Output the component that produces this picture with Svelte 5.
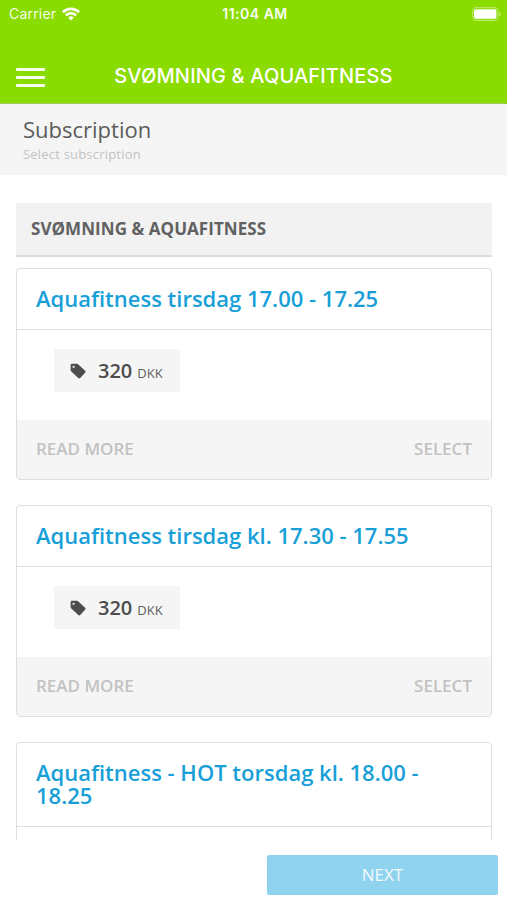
<script lang="ts">
  type Subscription = {
    name: string
    price?: number
    currency?: string
  }

  const category = 'SVØMNING & AQUAFITNESS'

  const subscriptions: Subscription[] = [
    { name: 'Aquafitness tirsdag 17.00 - 17.25', price: 320, currency: 'DKK' },
    { name: 'Aquafitness tirsdag kl. 17.30 - 17.55', price: 320, currency: 'DKK' },
    { name: 'Aquafitness - HOT torsdag kl. 18.00 - 18.25' },
  ]
</script>

<div class="app">
  <header class="top">
    <div class="status">
      <div class="status-left">
        <span class="carrier">Carrier</span>
        <svg class="wifi" width="18" height="14" viewBox="0 0 18 14" fill="none" stroke="#fff" stroke-width="2.6">
          <path d="M0.9 5.2a11.6 11.6 0 0 1 16.2 0" />
          <path d="M3.9 8.4a7.3 7.3 0 0 1 10.2 0" />
          <path d="M9 13.6 6.2 10.7a4 4 0 0 1 5.6 0z" fill="#fff" stroke="none" />
        </svg>
      </div>
      <span class="clock">11:04 AM</span>
      <div class="status-right">
        <svg width="29" height="14" viewBox="0 0 29 14">
          <rect x="0.6" y="0.6" width="25.3" height="12.8" rx="3.6" fill="none" stroke="#fff" stroke-opacity="0.4" stroke-width="1.1" />
          <rect x="2" y="2.2" width="22.4" height="9.6" rx="1.8" fill="#fff" />
          <path d="M27.1 5v4c.9-.4 1.4-1.1 1.4-2s-.5-1.6-1.4-2z" fill="#fff" fill-opacity="0.5" />
        </svg>
      </div>
    </div>
    <div class="navbar">
      <button class="menu" aria-label="Menu">
        <span></span>
        <span></span>
        <span></span>
      </button>
      <h1>{category}</h1>
    </div>
  </header>

  <section class="intro">
    <h2>Subscription</h2>
    <p>Select subscription</p>
  </section>

  <main class="list">
    <h3 class="category">{category}</h3>
    {#each subscriptions as item}
      <article class="card">
        <div class="card-title">{item.name}</div>
        <div class="card-body">
          {#if item.price}
            <div class="price">
              <svg width="16" height="16" viewBox="0 0 16 16">
                <path
                  fill="#4d4d4d"
                  fill-rule="evenodd"
                  d="M.6 2.3C.6 1.4 1.3.8 2.200.8H6.900c.6 0 1.100.2 1.500.6l6.700 6.400c.6.6.6 1.400 0 2l-4.900 5.200c-.6.6-1.400.6-2 0L1.300 8.500C.8 8.100.6 7.600.6 7zM3.600 2.700a1.100 1.100 0 1 0 0 2.200 1.100 1.100 0 0 0 0-2.200z"
                />
              </svg>
              <span class="amount">{item.price}</span>
              <span class="currency">{item.currency}</span>
            </div>
          {/if}
        </div>
        {#if item.price}
          <div class="card-actions">
            <button>READ MORE</button>
            <button>SELECT</button>
          </div>
        {/if}
      </article>
    {/each}
  </main>

  <footer class="bottom">
    <button class="next">NEXT</button>
  </footer>
</div>

<style>
  :global(body) {
    margin: 0;
    background: #fff;
  }

  .app {
    display: flex;
    flex-direction: column;
    width: 507px;
    height: 900px;
    overflow: hidden;
    background: #fff;
    font-family: 'Open Sans', sans-serif;
  }

  h1,
  h2,
  h3,
  p {
    margin: 0;
  }

  button {
    padding: 0;
    border: none;
    background: none;
    font-family: inherit;
    cursor: pointer;
  }

  .top {
    flex: none;
    height: 103px;
    border-bottom: 1px solid #a3c95c;
    background: #8adb00;
    color: #fff;
    font-family: Inter, sans-serif;
  }

  .status {
    display: grid;
    grid-template-columns: 1fr auto 1fr;
    align-items: center;
    height: 27px;
    padding: 0 6px 0 9px;
  }

  .status-left {
    display: flex;
    align-items: center;
    gap: 6px;
  }

  .carrier {
    font-size: 14px;
    letter-spacing: 0.2px;
    opacity: 0.9;
  }

  .clock {
    font-size: 14px;
    font-weight: 600;
    letter-spacing: 0.5px;
    opacity: 0.95;
  }

  .status-right {
    display: flex;
    justify-content: flex-end;
  }

  .navbar {
    display: grid;
    grid-template-columns: 29px 1fr 29px;
    align-items: center;
    height: 50px;
    margin-top: 25px;
    padding: 0 16px;
  }

  .menu {
    display: flex;
    flex-direction: column;
    gap: 5px;
  }

  .menu span {
    width: 29px;
    height: 3px;
    border-radius: 1px;
    background: #fff;
    opacity: 0.92;
  }

  h1 {
    margin-top: -2px;
    font-size: 20px;
    font-weight: 500;
    letter-spacing: 0.15px;
    text-align: center;
    white-space: nowrap;
  }

  .intro {
    flex: none;
    box-sizing: border-box;
    height: 71px;
    padding: 10px 23px 0;
    background: #f5f5f5;
  }

  h2 {
    color: #5c5c5c;
    font-size: 22px;
    font-weight: 400;
    line-height: 30px;
  }

  .intro p {
    color: #c3c3c3;
    font-size: 13px;
    letter-spacing: 0.2px;
    line-height: 20px;
  }

  .list {
    flex: 1;
    min-height: 0;
    padding: 28px 15px 0 16px;
    overflow: hidden;
  }

  .category {
    box-sizing: border-box;
    height: 54px;
    margin-bottom: 11px;
    padding-left: 15px;
    border-bottom: 2px solid #dcdcdc;
    background: #f2f2f2;
    color: #616161;
    font-size: 17px;
    font-weight: 700;
    letter-spacing: 0.06px;
    line-height: 52px;
  }

  .card {
    margin-bottom: 25px;
    border: 1px solid #dedede;
    border-radius: 4px;
    overflow: hidden;
  }

  .card-title {
    padding: 18px 55px 19px 19px;
    border-bottom: 1px solid #dedede;
    color: #189fd8;
    font-size: 22px;
    font-weight: 600;
    line-height: 23px;
  }

  .card-body {
    box-sizing: border-box;
    height: 90px;
    padding: 19px 0 0 37px;
  }

  .price {
    display: flex;
    align-items: baseline;
    box-sizing: border-box;
    width: 126px;
    height: 43px;
    padding-left: 16px;
    background: #f5f5f5;
    line-height: 44px;
  }

  .price svg {
    align-self: center;
    margin-top: 1px;
  }

  .amount {
    margin-left: 12px;
    color: #4d4d4d;
    font-size: 20px;
    font-weight: 600;
  }

  .currency {
    margin-left: 5px;
    color: #5e5e5e;
    font-size: 13px;
  }

  .card-actions {
    display: flex;
    justify-content: space-between;
    height: 59px;
    padding: 0 19px;
    background: #f5f5f5;
  }

  .card-actions button {
    padding-bottom: 2px;
    color: #c2c2c2;
    font-size: 17px;
    font-weight: 600;
  }

  .bottom {
    display: flex;
    flex: none;
    justify-content: flex-end;
    box-sizing: border-box;
    height: 60px;
    padding: 15px 9px 0;
  }

  .next {
    width: 231px;
    height: 40px;
    padding-bottom: 2px;
    border-radius: 2px;
    background: #8fd3ee;
    color: #f2fafd;
    font-size: 17px;
  }
</style>
